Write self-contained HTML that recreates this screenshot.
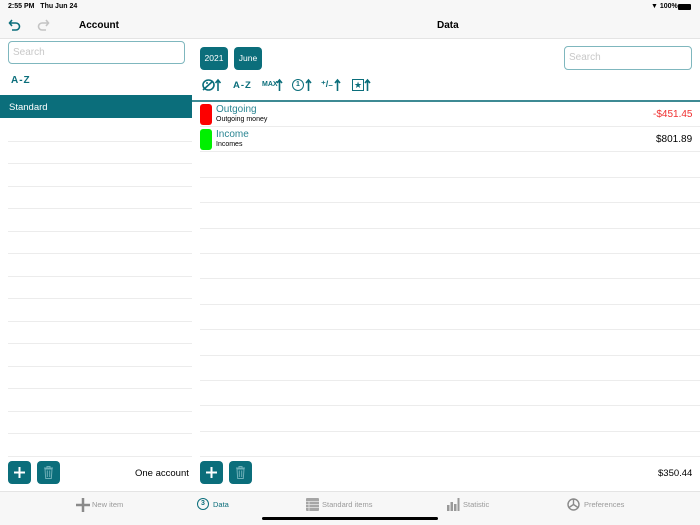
<!DOCTYPE html>
<html><head><meta charset="utf-8"><style>
*{margin:0;padding:0;box-sizing:border-box}
body{width:700px;height:525px;overflow:hidden;background:#fff;font-family:"Liberation Sans",sans-serif;position:relative;color:#000}
.a{position:absolute}
.hdr{left:0;top:0;width:700px;height:39px;background:#f7f7f7;border-bottom:1px solid #e4e4e4}
.teal{background:#0b6e7b}
.btn{position:absolute;border-radius:4px;background:#0b6e7b;color:#fff;text-align:center}
.ll{position:absolute;left:8px;width:184px;height:1px;background:#ececec}
.rl{position:absolute;left:200px;width:500px;height:1px;background:#ececec}
.srch{position:absolute;border:1px solid #7fb7be;border-radius:4px;color:#c8c8c8;font-size:10px;padding-left:4px;background:#fff}
.tab{position:absolute;top:500px;font-size:7.5px;color:#9a9a9a}
.ic{position:absolute;color:#0b6e7b;font-weight:bold}
</style></head><body>
<div class="a hdr"></div>
<div class="a" style="left:8px;top:3px;font-size:7px;font-weight:bold">2:55 PM&nbsp;&nbsp; Thu Jun 24</div>
<div class="a" style="left:651px;top:3px;font-size:7px;font-weight:bold">&#9660; 100%</div>
<div class="a" style="left:678px;top:4px;width:13px;height:6px;background:#000;border-radius:1px"></div>
<svg class="a" style="left:8px;top:18px" width="14" height="14" viewBox="0 0 14 14"><path d="M4 2 L1.5 5 L4 8 M1.5 5 H8 A3.5 3.5 0 0 1 8 12 H4" fill="none" stroke="#0b6e7b" stroke-width="1.6"/></svg>
<svg class="a" style="left:36px;top:18px" width="14" height="14" viewBox="0 0 14 14"><path d="M10 2 L12.5 5 L10 8 M12.5 5 H6 A3.5 3.5 0 0 0 6 12 H10" fill="none" stroke="#c4c4c4" stroke-width="1.6"/></svg>
<div class="a" style="left:79px;top:20px;font-size:10px;font-weight:bold">Account</div>
<div class="a" style="left:437px;top:20px;font-size:10px;font-weight:bold">Data</div>

<div class="srch" style="left:8px;top:41px;width:177px;height:23px;line-height:21px">Search</div>
<div class="a" style="left:11px;top:75px;font-size:10px;color:#0b6e7b;font-weight:bold;letter-spacing:1px">A-Z</div>
<div class="a teal" style="left:0;top:95px;width:192px;height:23px"></div>
<div class="a" style="left:9px;top:102px;font-size:9.5px;color:#fff">Standard</div>

<div class="btn" style="left:200px;top:47px;width:28px;height:23px;line-height:23px;font-size:8.5px">2021</div>
<div class="btn" style="left:234px;top:47px;width:28px;height:23px;line-height:23px;font-size:8.5px">June</div>
<div class="srch" style="left:564px;top:46px;width:128px;height:24px;line-height:22px">Search</div>

<svg class="a" style="left:202px;top:78px" width="20" height="14" viewBox="0 0 20 14"><ellipse cx="6.5" cy="7" rx="5.5" ry="5" fill="none" stroke="#0b6e7b" stroke-width="1.6"/><path d="M1 12 L11 3" stroke="#0b6e7b" stroke-width="1.6"/><circle cx="5" cy="5" r="1" fill="#0b6e7b"/><path d="M16 13 V2 M13.5 5 L16 2 L18.5 5" fill="none" stroke="#0b6e7b" stroke-width="1.6"/></svg>
<div class="ic" style="left:233px;top:80px;font-size:9.5px;letter-spacing:1px">A-Z</div>
<div class="ic" style="left:262px;top:81px;font-size:7px">MAX</div>
<svg class="a" style="left:276px;top:78px" width="7" height="14" viewBox="0 0 7 14"><path d="M3.5 13 V2 M1 5 L3.5 2 L6 5" fill="none" stroke="#0b6e7b" stroke-width="1.6"/></svg>
<div class="a" style="left:292px;top:79px;width:12px;height:12px;border:1.6px solid #0b6e7b;border-radius:50%;font-size:7px;line-height:9px;text-align:center;color:#0b6e7b;font-weight:bold">1</div>
<svg class="a" style="left:305px;top:78px" width="7" height="14" viewBox="0 0 7 14"><path d="M3.5 13 V2 M1 5 L3.5 2 L6 5" fill="none" stroke="#0b6e7b" stroke-width="1.6"/></svg>
<div class="ic" style="left:321px;top:79px;font-size:9px">&#8314;/&#8331;</div>
<svg class="a" style="left:334px;top:78px" width="7" height="14" viewBox="0 0 7 14"><path d="M3.5 13 V2 M1 5 L3.5 2 L6 5" fill="none" stroke="#0b6e7b" stroke-width="1.6"/></svg>
<div class="a" style="left:352px;top:79px;width:12px;height:12px;border:1px solid #0b6e7b;font-size:9px;line-height:10px;text-align:center;color:#0b6e7b">&#9733;</div>
<svg class="a" style="left:364px;top:78px" width="7" height="14" viewBox="0 0 7 14"><path d="M3.5 13 V2 M1 5 L3.5 2 L6 5" fill="none" stroke="#0b6e7b" stroke-width="1.6"/></svg>
<div class="a" style="left:192px;top:100px;width:508px;height:2px;background:#3d8a94"></div>

<div class="a" style="left:200px;top:104px;width:12px;height:21px;background:#fd0000;border-radius:3px"></div>
<div class="a" style="left:216px;top:104px;font-size:10px;color:#2a8592">Outgoing</div>
<div class="a" style="left:216px;top:116px;font-size:7px">Outgoing money</div>
<div class="a" style="left:653px;top:109px;font-size:10px;color:#f03030">-$451.45</div>
<div class="a" style="left:200px;top:129px;width:12px;height:21px;background:#00f000;border-radius:3px"></div>
<div class="a" style="left:216px;top:129px;font-size:10px;color:#2a8592">Income</div>
<div class="a" style="left:216px;top:141px;font-size:7px">Incomes</div>
<div class="a" style="left:656px;top:134px;font-size:10px">$801.89</div>

<div class="ll" style="top:141px"></div><div class="ll" style="top:163px"></div><div class="ll" style="top:186px"></div><div class="ll" style="top:208px"></div><div class="ll" style="top:231px"></div><div class="ll" style="top:253px"></div><div class="ll" style="top:276px"></div><div class="ll" style="top:298px"></div><div class="ll" style="top:321px"></div><div class="ll" style="top:343px"></div><div class="ll" style="top:366px"></div><div class="ll" style="top:388px"></div><div class="ll" style="top:411px"></div><div class="ll" style="top:433px"></div><div class="ll" style="top:456px"></div>
<div class="rl" style="top:126px"></div><div class="rl" style="top:151px"></div><div class="rl" style="top:177px"></div><div class="rl" style="top:202px"></div><div class="rl" style="top:228px"></div><div class="rl" style="top:253px"></div><div class="rl" style="top:278px"></div><div class="rl" style="top:304px"></div><div class="rl" style="top:329px"></div><div class="rl" style="top:355px"></div><div class="rl" style="top:380px"></div><div class="rl" style="top:405px"></div><div class="rl" style="top:431px"></div><div class="rl" style="top:456px"></div>

<svg width="0" height="0" style="position:absolute"><defs>
<g id="plus"><path d="M11.5 6 V17 M6 11.5 H17" stroke="#fff" stroke-width="2"/></g>
<g id="trash"><path d="M7 7 H16 M10 7 V5.5 H13 V7 M8 8 L8.7 17.5 H14.3 L15 8 Z M10.3 9.5 V16 M12.7 9.5 V16" fill="none" stroke="#6fb0b8" stroke-width="1"/></g>
</defs></svg>
<svg class="btn" style="left:8px;top:461px" width="23" height="23"><use href="#plus"/></svg>
<svg class="btn" style="left:37px;top:461px" width="23" height="23"><use href="#trash"/></svg>
<div class="a" style="left:135px;top:468px;font-size:9.5px">One account</div>
<svg class="btn" style="left:200px;top:461px" width="23" height="23"><use href="#plus"/></svg>
<svg class="btn" style="left:229px;top:461px" width="23" height="23"><use href="#trash"/></svg>
<div class="a" style="left:658px;top:468px;font-size:9.5px">$350.44</div>

<div class="a" style="left:0;top:491px;width:700px;height:34px;background:#f7f7f7;border-top:1px solid #e4e4e4"></div>
<svg class="a" style="left:76px;top:498px" width="14" height="14"><path d="M7 0 V14 M0 7 H14" stroke="#8a8a8a" stroke-width="2.5"/></svg>
<div class="tab" style="left:92px">New item</div>
<div class="a" style="left:197px;top:498px;width:12px;height:12px;border:1.5px solid #0b6e7b;border-radius:50%;font-size:7px;line-height:9px;text-align:center;color:#0b6e7b;font-weight:bold">3</div>
<div class="tab" style="left:213px;color:#0b6e7b">Data</div>
<svg class="a" style="left:306px;top:498px" width="13" height="13"><rect width="13" height="13" rx="1" fill="#a5a5a5"/><path d="M0 3.5H13M0 6.5H13M0 9.5H13M3 3V13" stroke="#e8e8e8" stroke-width="0.8"/></svg>
<div class="tab" style="left:322px">Standard items</div>
<svg class="a" style="left:447px;top:497px" width="13" height="14"><rect x="0" y="8" width="2.5" height="6" fill="#999"/><rect x="3.5" y="5" width="2.5" height="9" fill="#999"/><rect x="7" y="7" width="2.5" height="7" fill="#999"/><rect x="10.5" y="1" width="2" height="13" fill="#999"/></svg>
<div class="tab" style="left:463px">Statistic</div>
<svg class="a" style="left:567px;top:498px" width="13" height="13"><circle cx="6.5" cy="6.5" r="5.5" fill="none" stroke="#8a8a8a" stroke-width="1.4"/><path d="M6.5 6.5 V1 M6.5 6.5 L2 9.5 M6.5 6.5 L11 9.5" stroke="#8a8a8a" stroke-width="1.4"/></svg>
<div class="tab" style="left:584px">Preferences</div>
<div class="a" style="left:262px;top:517px;width:176px;height:3px;background:#000;border-radius:2px"></div>
</body></html>
